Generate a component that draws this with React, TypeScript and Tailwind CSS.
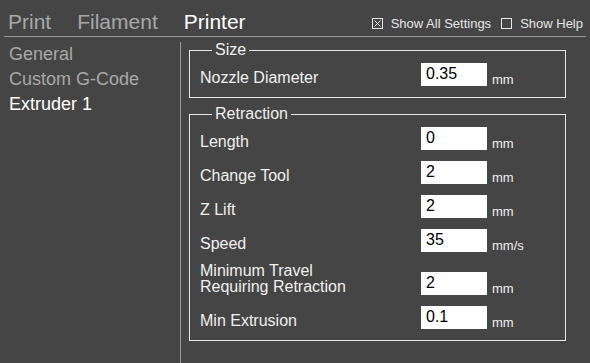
import React from "react";

const tabs = [
  { label: "Print", active: false },
  { label: "Filament", active: false },
  { label: "Printer", active: true },
];

const nav = [
  { label: "General", active: false },
  { label: "Custom G-Code", active: false },
  { label: "Extruder 1", active: true },
];

type Field = { label: string[]; value: string; unit: string };

const retraction: Field[] = [
  { label: ["Length"], value: "0", unit: "mm" },
  { label: ["Change Tool"], value: "2", unit: "mm" },
  { label: ["Z Lift"], value: "2", unit: "mm" },
  { label: ["Speed"], value: "35", unit: "mm/s" },
  { label: ["Minimum Travel", "Requiring Retraction"], value: "2", unit: "mm" },
  { label: ["Min Extrusion"], value: "0.1", unit: "mm" },
];

function Checkbox({ checked }: { checked: boolean }) {
  return (
    <svg width="11" height="11" viewBox="0 0 11 11" className="shrink-0">
      <rect x="0.5" y="0.5" width="10" height="10" fill="none" stroke="#e6e6e6" strokeWidth="1" />
      {checked && (
        <path d="M2.5 2.5 L8.5 8.5 M8.5 2.5 L2.5 8.5" stroke="#e6e6e6" strokeWidth="1" />
      )}
    </svg>
  );
}

function Row({ field }: { field: Field }) {
  return (
    <div className="flex items-end">
      <div className="w-[221px] text-[16px] leading-[16px] text-[#f0f0f0]">
        {field.label.map((l) => (
          <div key={l}>{l}</div>
        ))}
      </div>
      <div className="w-[66px] h-[23px] bg-white text-black text-[16px] leading-[16px] pl-[5px] pt-[3px]">
        {field.value}
      </div>
      <div className="ml-[5px] text-[13px] leading-[13px] text-[#f0f0f0]">{field.unit}</div>
    </div>
  );
}

function Group({ title, fields, className }: { title: string; fields: Field[]; className?: string }) {
  return (
    <fieldset className={`border border-[#e8e8e8] px-[10px] pt-[5px] pb-[11px] ${className ?? ""}`}>
      <legend className="ml-[12px] px-[3px] text-[16px] leading-[16px] text-[#f0f0f0]">{title}</legend>
      <div className="flex flex-col gap-[11px]">
        {fields.map((f) => (
          <Row key={f.label.join(" ")} field={f} />
        ))}
      </div>
    </fieldset>
  );
}

export default function App() {
  return (
    <div
      className="w-[590px] h-[363px] bg-[#454545] flex flex-col overflow-hidden"
      style={{ fontFamily: '"Liberation Sans", Arial, sans-serif' }}
    >
      {/* Header */}
      <div className="mx-[4px] h-[37px] border-b border-[#9a9a9a] flex items-end justify-between pb-[2px] pl-[4px]">
        <div className="flex gap-[26px] text-[21px] leading-[24px]">
          {tabs.map((t) => (
            <span key={t.label} className={t.active ? "text-white" : "text-[#a8a8a8]"}>
              {t.label}
            </span>
          ))}
        </div>
        <div className="flex items-center text-[13px] leading-[15px] text-[#e6e6e6] mb-[3px] pr-[3px]">
          <Checkbox checked />
          <span className="ml-[8px]">Show All Settings</span>
          <span className="ml-[10px]"><Checkbox checked={false} /></span>
          <span className="ml-[8px]">Show Help</span>
        </div>
      </div>

      {/* Body */}
      <div className="flex flex-1 pt-[5px] min-h-0">
        <div className="w-[181px] border-r border-[#9a9a9a] pl-[9px] text-[18px] leading-[25px]">
          {nav.map((n) => (
            <div key={n.label} className={n.active ? "text-white" : "text-[#a8a8a8]"}>
              {n.label}
            </div>
          ))}
        </div>
        <div className="pl-[8px] w-[385px]">
          <Group title="Size" fields={[{ label: ["Nozzle Diameter"], value: "0.35", unit: "mm" }]} />
          <Group title="Retraction" fields={retraction} className="mt-[8px]" />
        </div>
      </div>
    </div>
  );
}
